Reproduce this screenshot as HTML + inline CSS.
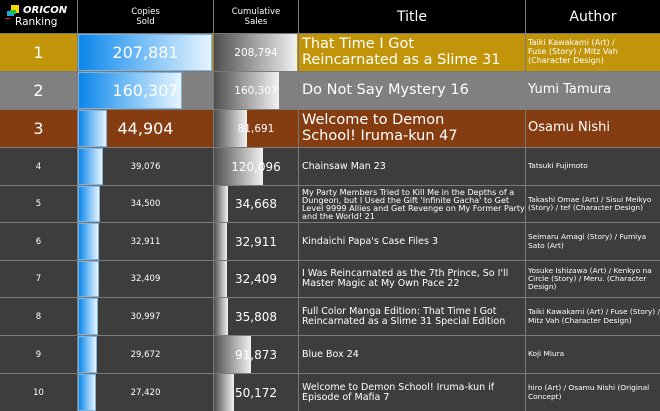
<!DOCTYPE html>
<html><head><meta charset="utf-8"><style>
*{margin:0;padding:0;box-sizing:border-box}
body{width:660px;height:411px;background:#7a7a7a;font-family:"DejaVu Sans","Liberation Sans",sans-serif;color:#fff;overflow:hidden;position:relative}
.c{position:absolute;display:flex;align-items:center;overflow:hidden}
.h{background:#000;justify-content:center;text-align:center;font-size:8.5px;line-height:10px}
.r{justify-content:center}
.t{padding-left:3px;line-height:1.05}
.a{padding-left:2px;line-height:1.12}
.bar{position:absolute;left:0;top:0;bottom:0;background:linear-gradient(90deg,#0a86ea,#6fbaf5 45%,#e6f4ff);border:1px solid #7fb4de}
.gb{position:absolute;left:0;top:0;bottom:0;background:linear-gradient(90deg,#4e4e4e,#9a9a9a 45%,#f2f2f2)}
.n{position:relative;width:100%;text-align:center}
.d{background:#3d3d3d}
.d.a{font-size:7.4px !important}
</style></head><body>
<div class="c h" style="left:0;top:0;width:77px;height:33px;display:block">
<div style="position:absolute;left:11px;top:5px;width:8px;height:8px;background:#f4d800"></div>
<div style="position:absolute;left:7px;top:11px;width:7px;height:5px;background:#1fa3e8"></div>
<div style="position:absolute;left:10px;top:10px;width:6px;height:4px;background:#2db84a"></div>
<div style="position:absolute;left:5px;top:18px;width:5px;height:1px;background:#e2231a"></div>
<div style="position:absolute;left:23px;top:5px;font-size:10px;font-weight:bold;font-style:italic;line-height:11px">ORICON</div>
<div style="position:absolute;left:15px;top:16px;font-size:10.5px;line-height:12px">Ranking</div>
</div>
<div class="c h" style="left:78px;top:0;width:135px;height:33px">Copies<br>Sold</div>
<div class="c h" style="left:214px;top:0;width:84px;height:33px">Cumulative<br>Sales</div>
<div class="c h" style="left:299px;top:0;width:226px;height:33px;font-size:14px">Title</div>
<div class="c h" style="left:526px;top:0;width:134px;height:33px;font-size:14px">Author</div>

<div class="c r" style="left:0;top:34px;width:77px;height:37px;background:#c2940a;font-size:16px">1</div>
<div class="c" style="left:78px;top:34px;width:135px;height:37px;background:#c2940a"><div class="bar" style="width:134px"></div><div class="n" style="font-size:16px">207,881</div></div>
<div class="c" style="left:214px;top:34px;width:84px;height:37px;background:#c2940a"><div class="gb" style="width:83px"></div><div class="n" style="font-size:10.5px">208,794</div></div>
<div class="c t" style="left:299px;top:34px;width:226px;height:37px;background:#c2940a;font-size:14.5px">That Time I Got<br>Reincarnated as a Slime 31</div>
<div class="c a" style="left:526px;top:34px;width:134px;height:37px;background:#c2940a;font-size:8px">Taiki Kawakami (Art) /<br>Fuse (Story) / Mitz Vah<br>(Character Design)</div>

<div class="c r" style="left:0;top:72px;width:77px;height:37px;background:#808080;font-size:16px">2</div>
<div class="c" style="left:78px;top:72px;width:135px;height:37px;background:#808080"><div class="bar" style="width:104px"></div><div class="n" style="font-size:16px">160,307</div></div>
<div class="c" style="left:214px;top:72px;width:84px;height:37px;background:#808080"><div class="gb" style="width:65px"></div><div class="n" style="font-size:10.5px">160,307</div></div>
<div class="c t" style="left:299px;top:72px;width:226px;height:37px;background:#808080;font-size:14.5px">Do Not Say Mystery 16</div>
<div class="c a" style="left:526px;top:72px;width:134px;height:37px;background:#808080;font-size:13px">Yumi Tamura</div>

<div class="c r" style="left:0;top:110px;width:77px;height:37px;background:#853c10;font-size:16px">3</div>
<div class="c" style="left:78px;top:110px;width:135px;height:37px;background:#853c10"><div class="bar" style="width:29px"></div><div class="n" style="font-size:16px">44,904</div></div>
<div class="c" style="left:214px;top:110px;width:84px;height:37px;background:#853c10"><div class="gb" style="width:33px"></div><div class="n" style="font-size:10.5px">81,691</div></div>
<div class="c t" style="left:299px;top:110px;width:226px;height:37px;background:#853c10;font-size:14.5px">Welcome to Demon<br>School! Iruma-kun 47</div>
<div class="c a" style="left:526px;top:110px;width:134px;height:37px;background:#853c10;font-size:13px">Osamu Nishi</div>

<div class="c r d" style="left:0;top:148px;width:77px;height:37px;font-size:8.5px">4</div>
<div class="c d" style="left:78px;top:148px;width:135px;height:37px"><div class="bar" style="width:25px"></div><div class="n" style="font-size:8.5px">39,076</div></div>
<div class="c d" style="left:214px;top:148px;width:84px;height:37px"><div class="gb" style="width:49px"></div><div class="n" style="font-size:12px">120,096</div></div>
<div class="c t d" style="left:299px;top:148px;width:226px;height:37px;font-size:9.5px">Chainsaw Man 23</div>
<div class="c a d" style="left:526px;top:148px;width:134px;height:37px">Tatsuki Fujimoto</div>

<div class="c r d" style="left:0;top:186px;width:77px;height:36px;font-size:8.5px">5</div>
<div class="c d" style="left:78px;top:186px;width:135px;height:36px"><div class="bar" style="width:22px"></div><div class="n" style="font-size:8.5px">34,500</div></div>
<div class="c d" style="left:214px;top:186px;width:84px;height:36px"><div class="gb" style="width:14px"></div><div class="n" style="font-size:12px">34,668</div></div>
<div class="c t d" style="left:299px;top:186px;width:226px;height:36px;font-size:8.1px;line-height:8.2px">My Party Members Tried to Kill Me in the Depths of a Dungeon, but I Used the Gift 'Infinite Gacha' to Get Level 9999 Allies and Get Revenge on My Former Party and the World! 21</div>
<div class="c a d" style="left:526px;top:186px;width:134px;height:36px">Takashi Omae (Art) / Sisui Meikyo (Story) / tef (Character Design)</div>

<div class="c r d" style="left:0;top:223px;width:77px;height:37px;font-size:8.5px">6</div>
<div class="c d" style="left:78px;top:223px;width:135px;height:37px"><div class="bar" style="width:21px"></div><div class="n" style="font-size:8.5px">32,911</div></div>
<div class="c d" style="left:214px;top:223px;width:84px;height:37px"><div class="gb" style="width:13px"></div><div class="n" style="font-size:12px">32,911</div></div>
<div class="c t d" style="left:299px;top:223px;width:226px;height:37px;font-size:9.5px">Kindaichi Papa's Case Files 3</div>
<div class="c a d" style="left:526px;top:223px;width:134px;height:37px">Seimaru Amagi (Story) / Fumiya Sato (Art)</div>

<div class="c r d" style="left:0;top:261px;width:77px;height:36px;font-size:8.5px">7</div>
<div class="c d" style="left:78px;top:261px;width:135px;height:36px"><div class="bar" style="width:21px"></div><div class="n" style="font-size:8.5px">32,409</div></div>
<div class="c d" style="left:214px;top:261px;width:84px;height:36px"><div class="gb" style="width:13px"></div><div class="n" style="font-size:12px">32,409</div></div>
<div class="c t d" style="left:299px;top:261px;width:226px;height:36px;font-size:9.5px">I Was Reincarnated as the 7th Prince, So I'll Master Magic at My Own Pace 22</div>
<div class="c a d" style="left:526px;top:261px;width:134px;height:36px">Yosuke Ishizawa (Art) / Kenkyo na Circle (Story) / Meru. (Character Design)</div>

<div class="c r d" style="left:0;top:298px;width:77px;height:37px;font-size:8.5px">8</div>
<div class="c d" style="left:78px;top:298px;width:135px;height:37px"><div class="bar" style="width:20px"></div><div class="n" style="font-size:8.5px">30,997</div></div>
<div class="c d" style="left:214px;top:298px;width:84px;height:37px"><div class="gb" style="width:14px"></div><div class="n" style="font-size:12px">35,808</div></div>
<div class="c t d" style="left:299px;top:298px;width:226px;height:37px;font-size:9.5px">Full Color Manga Edition: That Time I Got Reincarnated as a Slime 31 Special Edition</div>
<div class="c a d" style="left:526px;top:298px;width:134px;height:37px">Taiki Kawakami (Art) / Fuse (Story) / Mitz Vah (Character Design)</div>

<div class="c r d" style="left:0;top:336px;width:77px;height:37px;font-size:8.5px">9</div>
<div class="c d" style="left:78px;top:336px;width:135px;height:37px"><div class="bar" style="width:19px"></div><div class="n" style="font-size:8.5px">29,672</div></div>
<div class="c d" style="left:214px;top:336px;width:84px;height:37px"><div class="gb" style="width:37px"></div><div class="n" style="font-size:12px">91,873</div></div>
<div class="c t d" style="left:299px;top:336px;width:226px;height:37px;font-size:9.5px">Blue Box 24</div>
<div class="c a d" style="left:526px;top:336px;width:134px;height:37px">Koji Miura</div>

<div class="c r d" style="left:0;top:374px;width:77px;height:37px;font-size:8.5px">10</div>
<div class="c d" style="left:78px;top:374px;width:135px;height:37px"><div class="bar" style="width:18px"></div><div class="n" style="font-size:8.5px">27,420</div></div>
<div class="c d" style="left:214px;top:374px;width:84px;height:37px"><div class="gb" style="width:20px"></div><div class="n" style="font-size:12px">50,172</div></div>
<div class="c t d" style="left:299px;top:374px;width:226px;height:37px;font-size:9.5px">Welcome to Demon School! Iruma-kun if Episode of Mafia 7</div>
<div class="c a d" style="left:526px;top:374px;width:134px;height:37px">hiro (Art) / Osamu Nishi (Original Concept)</div>
</body></html>
